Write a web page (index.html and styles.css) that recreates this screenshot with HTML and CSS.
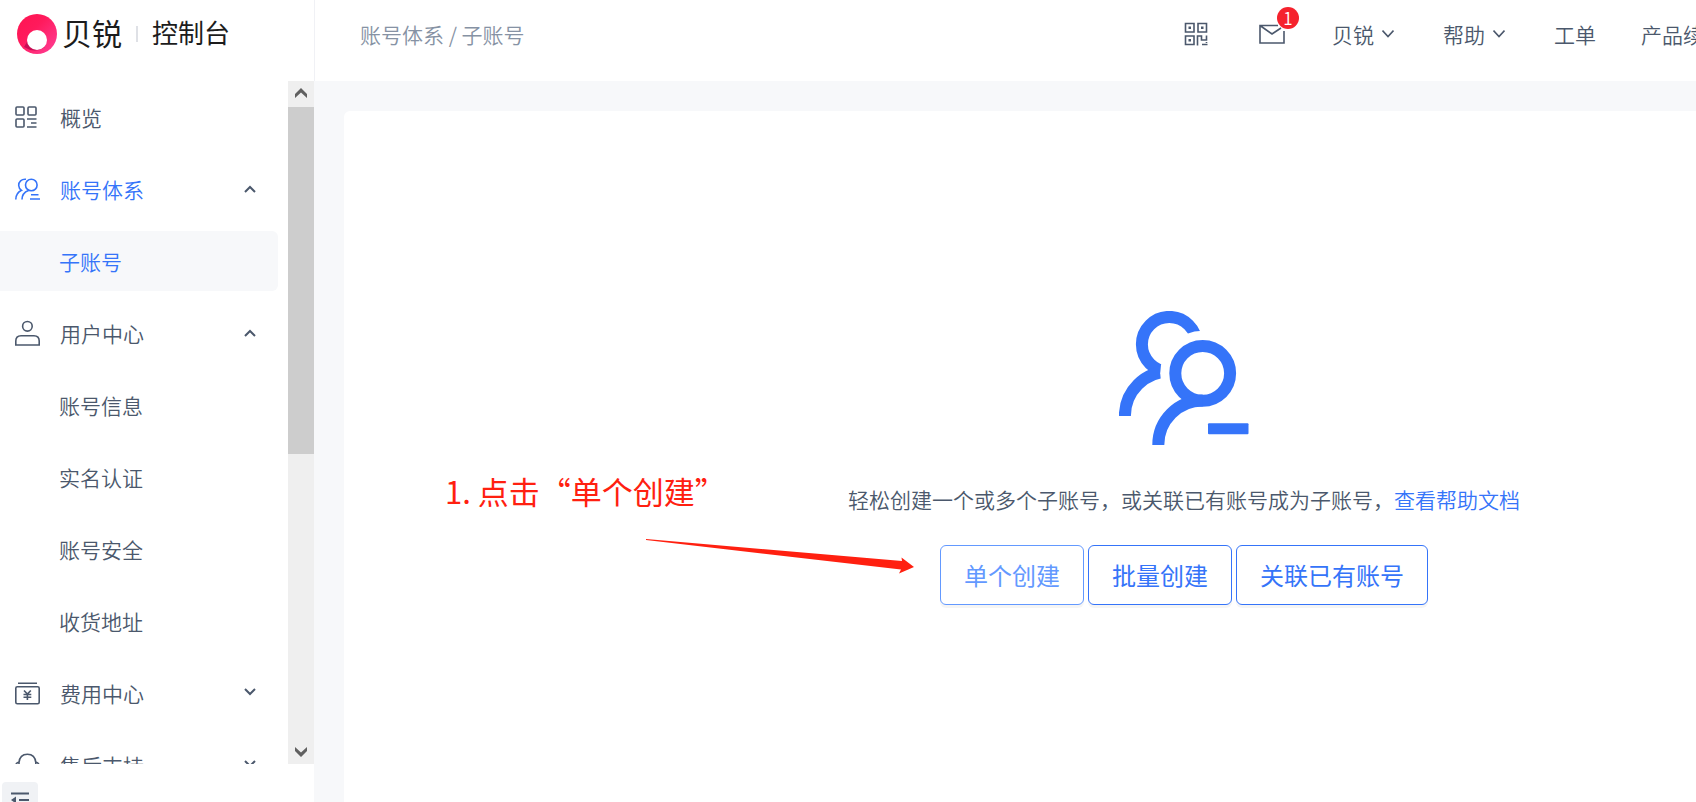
FILE: index.html
```html
<!DOCTYPE html>
<html lang="zh-CN">
<head>
    <meta charset="UTF-8">
    <meta name="viewport" content="width=device-width, initial-scale=1.0">
    <title>贝锐控制台 - 子账号</title>
    <link rel="stylesheet" href="styles.css">
</head>
<body>
    <div class="layout">
        <aside class="sidebar">
            <div class="logo">
                <svg class="logo-mark" viewBox="0 0 40 40" aria-hidden="true">
                    <defs>
                        <linearGradient id="ring" x1="0" y1="0" x2="1" y2="1">
                            <stop offset="0" stop-color="#ff1450"/>
                            <stop offset="0.4" stop-color="#ff1a5c"/>
                            <stop offset="1" stop-color="#ff4099"/>
                        </linearGradient>
                    </defs>
                    <circle cx="20" cy="20" r="20" fill="url(#ring)"/>
                    <path d="M7 33 Q18 40 28 33 L20 28 L10 28 Z" fill="#c80d55"/>
                    <circle cx="20" cy="26" r="10" fill="#fff"/>
                </svg>
                <span class="logo-name">贝锐</span>
                <span class="logo-line"></span>
                <span class="logo-sub">控制台</span>
            </div>

            <div class="menu-wrap">
                <nav class="menu">
                    <a class="item" href="#">
                        <svg class="icon" viewBox="0 0 28 28">
                            <rect x="2" y="4" width="8" height="8" rx="1"/>
                            <rect x="14" y="4" width="8" height="8" rx="1"/>
                            <rect x="2" y="16" width="8" height="8" rx="1"/>
                            <path d="M13 16H22.500M17 20H22.500M13 24H22.500"/>
                        </svg>
                        概览
                    </a>
                    <a class="item active" href="#">
                        <svg class="icon" viewBox="0 0 28 28">
                            <circle cx="17.300" cy="10" r="5.800"/>
                            <path d="M8 24.500C8 20 10.500 17 14.500 15.500M12 4.300C7.500 3.800 4.500 7 4.700 10.500C4.800 12.500 5.600 14 7.500 15.300C4 17 1.800 20 1.800 24.500M17 19.700H24.500M16 24H26"/>
                        </svg>
                        账号体系
                        <svg class="arrow" viewBox="0 0 12 12"><path d="M1 9L6 4L11 9"/></svg>
                    </a>
                    <a class="item sub active current" href="#">子账号</a>
                    <a class="item" href="#">
                        <svg class="icon" viewBox="0 0 28 28">
                            <circle cx="13.400" cy="7.300" r="4.800"/>
                            <path d="M1.800 26V22Q1.800 16.700 7 16.700H20Q25.200 16.700 25.200 22V26Z"/>
                        </svg>
                        用户中心
                        <svg class="arrow" viewBox="0 0 12 12"><path d="M1 9L6 4L11 9"/></svg>
                    </a>
                    <a class="item sub" href="#">账号信息</a>
                    <a class="item sub" href="#">实名认证</a>
                    <a class="item sub" href="#">账号安全</a>
                    <a class="item sub" href="#">收货地址</a>
                    <a class="item" href="#">
                        <svg class="icon" viewBox="0 0 28 28">
                            <rect x="1.800" y="7.700" width="23.400" height="17" rx="1.500"/>
                            <path d="M4 4.300H23M10 11.500L13.400 15L16.800 11.500M13.400 15V21M9.500 15.500H17.300M9.500 18.300H17.300"/>
                        </svg>
                        费用中心
                        <svg class="arrow" viewBox="0 0 12 12"><path d="M1 2L6 7L11 2"/></svg>
                    </a>
                    <a class="item" href="#">
                        <svg class="icon" viewBox="0 0 28 28">
                            <path d="M5 18V11.500C5.500 6 9 3.200 13.400 3.200S21.300 6 21.800 11.500V18M5 11C3 11.500 1.800 13 1.800 15S3 18 5 18M21.800 11C23.800 11.500 25 13 25 15S23.800 18 21.800 18"/>
                        </svg>
                        售后支持
                        <svg class="arrow" viewBox="0 0 12 12"><path d="M1 2L6 7L11 2"/></svg>
                    </a>
                </nav>
                <div class="scrollbar">
                    <svg class="scroll-btn" viewBox="0 0 26 26"><path d="M7 13L13 7L19 13V17L13 11.500L7 17Z"/></svg>
                    <div class="track"><div class="thumb"></div></div>
                    <svg class="scroll-btn" viewBox="0 0 26 26"><path d="M7 9L13 14.500L19 9V13L13 19L7 13Z"/></svg>
                </div>
            </div>

            <div class="sidebar-foot">
                <button class="fold" aria-label="收起菜单">
                    <svg viewBox="0 0 36 36"><path d="M9 11.500H27M17 18H27M9 24.500H27"/><path class="solid" d="M9 18L14 14.500V21.500Z"/></svg>
                </button>
            </div>
        </aside>

        <div class="page">
            <header class="header">
                <div class="breadcrumb">账号体系 / 子账号</div>
                <div class="tools">
                    <button class="tool" aria-label="二维码">
                        <svg class="qr" viewBox="0 0 24 24">
                            <path d="M1.500 1.500H10V10H1.500ZM14 1.500H22.500V10H14ZM1.500 14H10V22.500H1.500ZM13.500 23.500V14H17.500V18H22.500V13.500M22.500 20V21M18 22.500H23.500"/>
                            <path class="solid" d="M4.500 4.500H7V7H4.500ZM17 4.500H19.500V7H17ZM4.500 17H7V19.500H4.500Z"/>
                        </svg>
                    </button>
                    <button class="tool mail" aria-label="消息">
                        <svg viewBox="0 0 26 20"><path d="M19 1.500H1V19H25V7M1 1.500L13 10L22 4"/></svg>
                        <span class="badge">1</span>
                    </button>
                    <button class="tool">贝锐<svg class="caret" viewBox="0 0 12 12"><path d="M0.500 2.500L6 8.500L11.500 2.500"/></svg></button>
                    <button class="tool">帮助<svg class="caret" viewBox="0 0 12 12"><path d="M0.500 2.500L6 8.500L11.500 2.500"/></svg></button>
                    <a class="tool" href="#">工单</a>
                    <a class="tool" href="#">产品续费</a>
                </div>
            </header>

            <main class="content">
                <section class="card">
                    <svg class="empty-icon" viewBox="0 0 130 134" aria-hidden="true">
                        <circle cx="50.300" cy="33.300" r="27.400"/>
                        <path d="M5.900 105A44.400 44.400 0 0 1 50.300 60.600"/>
                        <circle class="gap" cx="83.700" cy="62.300" r="42.500"/>
                        <circle cx="83.700" cy="62.300" r="27.400"/>
                        <path d="M39.300 134A44.400 44.400 0 0 1 83.700 89.600"/>
                        <rect class="solid" x="89" y="112.300" width="40.500" height="11" rx="1"/>
                    </svg>
                    <p class="tip">轻松创建一个或多个子账号，或关联已有账号成为子账号，<a href="#">查看帮助文档</a></p>
                    <div class="actions">
                        <button class="btn hover">单个创建</button>
                        <button class="btn">批量创建</button>
                        <button class="btn">关联已有账号</button>
                    </div>
                </section>
            </main>
        </div>
    </div>

    <!-- 操作指引 -->
    <div class="guide">
        <p class="guide-text">1. 点击“单个创建”</p>
        <svg class="guide-arrow" viewBox="0 0 270 38"><path d="M1 2L257 24L256.500 20.500L269 30L254 36.500L256 32.500L1 3Z"/></svg>
    </div>
</body>
</html>
```

FILE: styles.css
```css
* {
    margin: 0;
    padding: 0;
    box-sizing: border-box;
}

body {
    font-family: "Noto Sans CJK SC", sans-serif;
    font-size: 21px;
    font-weight: 350;
    line-height: 28px;
    color: #4b586c;
    background: #f7f8fa;
    overflow: hidden;
}

a {
    color: inherit;
    text-decoration: none;
}

button {
    font: inherit;
    color: inherit;
    background: none;
    border: none;
    cursor: pointer;
}

svg {
    display: block;
    flex-shrink: 0;
    fill: none;
    stroke: currentColor;
    stroke-width: 1.6;
}

.solid {
    fill: currentColor;
    stroke: none;
}

/* the console never gets narrower than this, it is cut off instead */
.layout {
    display: flex;
    min-width: 2054px;
    height: 100vh;
}

.sidebar {
    display: flex;
    flex-direction: column;
    width: 314px;
    flex-shrink: 0;
    background: #fff;
}

.logo {
    display: flex;
    align-items: center;
    height: 81px;
    padding: 0 0 14px 17px;
    color: #1c1c1c;
    flex-shrink: 0;
}

.logo-mark {
    width: 40px;
    height: 40px;
    stroke: none;
}

.logo-name {
    margin-left: 5px;
    padding-bottom: 4px;
    font-size: 30px;
    font-weight: 400;
}

.logo-line {
    width: 2px;
    height: 16px;
    margin: 0 14px;
    background: #dfe1e6;
}

.logo-sub {
    padding-bottom: 4px;
    font-size: 26px;
    font-weight: 400;
}

.menu-wrap {
    display: flex;
    flex: 1;
    min-height: 0;
    overflow: hidden;
}

.menu {
    display: flex;
    flex-direction: column;
    gap: 12px;
    flex: 1;
    padding: 6px 10px 0 0;
}

.item {
    display: flex;
    align-items: center;
    gap: 18px;
    height: 60px;
    flex-shrink: 0;
    padding: 0 22px 0 14px;
    border-radius: 0 6px 6px 0;
}

.item.sub {
    padding-left: 59px;
}

.item.active {
    color: #3574f9;
}

.item.current {
    background: #f7f8fa;
}

.icon {
    width: 28px;
    height: 28px;
}

.arrow {
    width: 12px;
    height: 12px;
    margin-left: auto;
    color: #4b586c;
    stroke-width: 2;
}

.scrollbar {
    display: flex;
    flex-direction: column;
    width: 26px;
    background: #efefef;
}

.scroll-btn {
    width: 26px;
    height: 26px;
    fill: #606060;
    stroke: none;
}

.track {
    flex: 1;
}

.thumb {
    height: 55%;
    background: #cdcdcd;
}

.sidebar-foot {
    height: 38px;
    padding: 18px 2px 0;
    overflow: hidden;
    flex-shrink: 0;
}

.fold {
    width: 36px;
    height: 36px;
    background: #f0f2f5;
    border-radius: 4px;
}

.fold svg {
    stroke-width: 2;
}

.page {
    display: flex;
    flex-direction: column;
    flex: 1;
}

.header {
    display: flex;
    align-items: center;
    justify-content: space-between;
    height: 81px;
    padding: 0 329px 14px 45px;
    background: #fff;
    border-left: 1px solid #f0f1f5;
    flex-shrink: 0;
}

.breadcrumb {
    color: #8692a4;
}

.tools {
    display: flex;
    align-items: center;
    gap: 45px;
}

.tool {
    display: flex;
    align-items: center;
}

.qr {
    width: 24px;
    height: 24px;
    stroke-width: 1.6;
}

.mail {
    position: relative;
    justify-content: flex-end;
    width: 34px;
    padding-right: 2px;
}

.mail svg {
    width: 26px;
    height: 20px;
}

.badge {
    position: absolute;
    top: -17px;
    right: -12px;
    width: 22px;
    height: 22px;
    border-radius: 50%;
    background: #f5222d;
    color: #fff;
    font-size: 17px;
    line-height: 22px;
    text-align: center;
}

.caret {
    width: 12px;
    height: 12px;
    margin: 0 4px 0 8px;
}

.content {
    display: flex;
    flex: 1;
    padding: 30px 30px 0;
}

.card {
    display: flex;
    flex-direction: column;
    align-items: center;
    flex: 1;
    padding-top: 200px;
    background: #fff;
    border-radius: 6px 6px 0 0;
}

.empty-icon {
    width: 130px;
    height: 134px;
    color: #3574f9;
    stroke-width: 12;
}

.gap {
    fill: #fff;
    stroke: none;
}

.tip {
    margin: 40px 0 32px;
}

.tip a {
    color: #3574f9;
}

.actions {
    display: flex;
    gap: 4px;
}

.btn {
    height: 60px;
    padding: 0 23px;
    border: 1px solid #3574f9;
    border-radius: 6px;
    background: #fff;
    box-shadow: 0 3px 0 rgba(0, 0, 0, 0.04);
    color: #3574f9;
    font-size: 24px;
    font-weight: 400;
}

.btn.hover {
    border-color: #6399ff;
    color: #6399ff;
}

.guide {
    position: absolute;
    top: 472px;
    left: 445px;
    color: #ff2010;
}

.guide-text {
    font-size: 31px;
    font-weight: 400;
    line-height: 38px;
}

.guide-arrow {
    width: 270px;
    height: 38px;
    margin: 27px 0 0 200px;
    fill: currentColor;
    stroke: none;
}
```
